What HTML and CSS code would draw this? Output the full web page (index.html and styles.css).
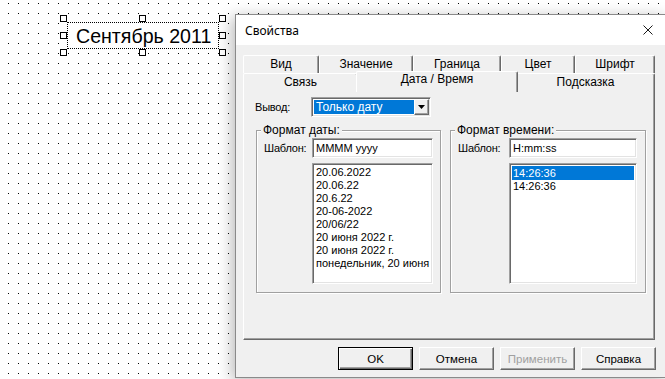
FILE: index.html
```html
<!DOCTYPE html>
<html lang="ru">
<head>
<meta charset="utf-8">
<title>Свойства</title>
<link rel="stylesheet" href="styles.css">
</head>
<body>
<div class="canvas">
  <div class="sel">
    <span class="sel-text">Сентябрь 2011</span>
    <i class="h h-tl"></i><i class="h h-tm"></i><i class="h h-tr"></i>
    <i class="h h-ml"></i><i class="h h-mr"></i>
    <i class="h h-bl"></i><i class="h h-bm"></i><i class="h h-br"></i>
  </div>

  <div class="dialog">
    <div class="titlebar">
      <span class="title">Свойства</span>
      <svg class="close" width="10" height="10" viewBox="0 0 10 10"><path d="M0.5 0.5 L9.5 9.5 M9.5 0.5 L0.5 9.5" stroke="#1a1a1a" stroke-width="1" fill="none"/></svg>
    </div>
    <div class="dbody">
      <div class="tabs">
        <div class="tabrow row1">
          <div class="tab t-vid">Вид</div>
          <div class="tab t-val">Значение</div>
          <div class="tab t-bord">Граница</div>
          <div class="tab t-col">Цвет</div>
          <div class="tab t-font">Шрифт</div>
        </div>
        <div class="tabrow row2">
          <div class="tab t-link">Связь</div>
          <div class="tab t-date active">Дата / Время</div>
          <div class="tab t-hint">Подсказка</div>
        </div>
        <div class="panel">
          <div class="out-row">
            <span class="lbl out-lbl">Вывод:</span>
            <div class="combo">
              <span class="combo-val">Только дату</span>
              <span class="combo-btn"><svg width="7" height="4" viewBox="0 0 7 4"><path d="M0 0 H7 L3.5 4 Z" fill="#000"/></svg></span>
            </div>
          </div>
          <div class="groups">
            <fieldset class="grp grp-date">
              <legend>Формат даты:</legend>
              <div class="grp-grid">
                <span class="lbl">Шаблон:</span>
                <div class="input">MMMM yyyy</div>
                <div class="list">
                  <div class="item">20.06.2022</div>
                  <div class="item">20.06.22</div>
                  <div class="item">20.6.22</div>
                  <div class="item">20-06-2022</div>
                  <div class="item">20/06/22</div>
                  <div class="item">20 июня 2022 г.</div>
                  <div class="item">20 июня 2022 г.</div>
                  <div class="item">понедельник, 20 июня</div>
                </div>
              </div>
            </fieldset>
            <fieldset class="grp grp-time">
              <legend>Формат времени:</legend>
              <div class="grp-grid">
                <span class="lbl">Шаблон:</span>
                <div class="input">H:mm:ss</div>
                <div class="list">
                  <div class="item selected">14:26:36</div>
                  <div class="item">14:26:36</div>
                </div>
              </div>
            </fieldset>
          </div>
        </div>
      </div>
      <div class="buttons">
        <button class="btn default">OK</button>
        <button class="btn">Отмена</button>
        <button class="btn disabled">Применить</button>
        <button class="btn">Справка</button>
      </div>
    </div>
  </div>
</div>
</body>
</html>
```
FILE: styles.css
```css
html, body {
  margin: 0;
  padding: 0;
}
body {
  width: 665px;
  height: 379px;
  overflow: hidden;
  font-family: "Liberation Sans", Arial, sans-serif;
  color: #000;
}
.canvas {
  position: relative;
  width: 665px;
  height: 379px;
  background-color: #fff;
  background-image:
    linear-gradient(#fff 9px, rgba(255,255,255,0) 9px),
    linear-gradient(90deg, #000 1px, rgba(0,0,0,0) 1px);
  background-size: 10px 10px, 10px 10px;
  background-position: 8px 4px, 8px 4px;
}

/* selected text element on the design canvas */
.sel {
  position: absolute;
  left: 67px;
  top: 22px;
  width: 152px;
  height: 27px;
  box-sizing: border-box;
  border: 1px dotted #000;
  background: #fff;
  display: flex;
  align-items: center;
  padding-left: 8px;
}
.sel-text {
  font-family: "Liberation Sans", Arial, sans-serif;
  font-size: 19.6px;
  line-height: 22px;
  color: #000;
  white-space: nowrap;
}
.h {
  position: absolute;
  width: 7px;
  height: 7px;
  box-sizing: border-box;
  border: 1px solid #000;
  background: #fff;
}
.h-tl { left: -8px; top: -8px; }
.h-tm { left: 71px; top: -8px; }
.h-tr { right: -8px; top: -8px; }
.h-ml { left: -8px; top: 9px; }
.h-mr { right: -8px; top: 9px; }
.h-bl { left: -8px; bottom: -8px; }
.h-bm { left: 71px; bottom: -8px; }
.h-br { right: -8px; bottom: -8px; }

/* dialog window */
.dialog {
  position: absolute;
  left: 235px;
  top: 14px;
  width: 432px;
  height: 364px;
  box-sizing: border-box;
  border: 1px solid #8a8a8a;
  background: #f0f0f0;
  box-shadow: -3px 3px 14px rgba(0,0,0,0.28);
  display: flex;
  flex-direction: column;
}
.titlebar {
  height: 30px;
  background: #fff;
  display: flex;
  align-items: center;
  justify-content: space-between;
  padding: 0 13px 0 9px;
  flex: none;
}
.title {
  font-family: "Noto Sans", "Liberation Sans", sans-serif;
  font-size: 12px;
  color: #000;
}
.close { display: block; }

.dbody {
  padding: 10px 0 0 7px;
  display: flex;
  flex-direction: column;
}
.tabs {
  width: 412px;
  display: flex;
  flex-direction: column;
}
.tabrow {
  display: flex;
  height: 18px;
  position: relative;
}
.row1 { z-index: 1; }
.row2 { z-index: 2; }
.tab {
  box-sizing: border-box;
  height: 18px;
  border-top: 1px solid #fff;
  border-left: 1px solid #fff;
  border-right: 1px solid #696969;
  box-shadow: inset -1px 0 #a0a0a0;
  border-radius: 2px 2px 0 0;
  background: #f0f0f0;
  font-size: 12px;
  line-height: 16px;
  text-align: center;
  white-space: nowrap;
}
.row2 .tab { height: 19px; }
.t-vid { width: 76px; }
.t-val { width: 94px; }
.t-bord { width: 88px; }
.t-col { width: 74px; }
.t-font { width: 80px; }
.t-link { width: 115px; }
.t-date { width: 158px; }
.t-hint { width: 139px; }
.tab.active {
  width: 162px;
  height: 21px;
  margin: -2px -2px -1px;
  position: relative;
  z-index: 3;
  line-height: 15px;
}

.panel {
  box-sizing: border-box;
  width: 412px;
  height: 250px;
  border: 1px solid;
  border-color: #fff #696969 #696969 #fff;
  box-shadow: inset -1px -1px #a0a0a0;
  background: #f0f0f0;
  padding: 6px 0 0 11px;
  display: flex;
  flex-direction: column;
  position: relative;
  z-index: 1;
  margin-top: -1px;
}
.lbl {
  font-size: 11px;
  letter-spacing: -0.2px;
  white-space: nowrap;
}
.out-row {
  display: flex;
  align-items: center;
  height: 20px;
}
.out-lbl { width: 56px; }
.combo {
  box-sizing: border-box;
  width: 120px;
  height: 20px;
  border: 1px solid;
  border-color: #a0a0a0 #fff #fff #a0a0a0;
  box-shadow: inset 1px 1px #696969, inset -1px -1px #e3e3e3;
  background: #fff;
  padding: 2px;
  display: flex;
}
.combo-val {
  flex: 1;
  background: #0078d7;
  color: #fff;
  font-size: 12px;
  line-height: 14px;
  padding-left: 2px;
  white-space: nowrap;
}
.combo-btn {
  box-sizing: border-box;
  width: 15px;
  border: 1px solid;
  border-color: #fff #696969 #696969 #fff;
  box-shadow: inset -1px -1px #a0a0a0;
  background: #f0f0f0;
  display: flex;
  align-items: center;
  justify-content: center;
  margin-top: -1px;
  margin-bottom: -1px;
  margin-right: -1px;
}
.combo-btn svg { display: block; }

.groups {
  display: flex;
  margin-top: 6px;
  margin-left: 1px;
  gap: 9px;
}
.grp {
  box-sizing: border-box;
  margin: 0;
  min-width: 0;
  height: 170px;
  border: 1px solid #a0a0a0;
  box-shadow: inset 1px 1px #fff, 1px 1px #fff;
  padding: 0 7px 6px 7px;
}
.grp-date { width: 185px; }
.grp-time { width: 196px; }
.grp legend {
  font-size: 12px;
  line-height: 14px;
  padding: 0 2px;
  margin-left: -3px;
  background: #f0f0f0;
  white-space: nowrap;
}
.grp-grid {
  display: grid;
  grid-template-rows: 20px 121px;
  row-gap: 5px;
  align-items: center;
  margin-top: 1px;
}
.grp-date .grp-grid { grid-template-columns: 48px 121px; }
.grp-time .grp-grid { grid-template-columns: 51px 128px; }
.input {
  box-sizing: border-box;
  height: 20px;
  border: 1px solid;
  border-color: #a0a0a0 #fff #fff #a0a0a0;
  box-shadow: inset 1px 1px #696969, inset -1px -1px #e3e3e3;
  background: #fff;
  font-size: 11px;
  line-height: 18px;
  padding-left: 3px;
  white-space: nowrap;
}
.list {
  grid-column: 2;
  box-sizing: border-box;
  height: 121px;
  align-self: stretch;
  border: 1px solid;
  border-color: #a0a0a0 #fff #fff #a0a0a0;
  box-shadow: inset 1px 1px #696969, inset -1px -1px #e3e3e3;
  background: #fff;
  padding: 2px 2px 0 2px;
  overflow: hidden;
}
.item {
  font-size: 11px;
  line-height: 13px;
  padding-left: 1px;
  white-space: nowrap;
}
.item.selected {
  background: #0078d7;
  color: #fff;
  line-height: 14px;
}

.buttons {
  display: flex;
  justify-content: flex-end;
  gap: 6px;
  width: 413px;
  margin-top: 7px;
}
.btn {
  box-sizing: border-box;
  width: 75px;
  height: 23px;
  margin: 0;
  padding: 0;
  border: 1px solid;
  border-color: #fff #696969 #696969 #fff;
  box-shadow: inset -1px -1px #a0a0a0;
  background: #f0f0f0;
  font-family: "Liberation Sans", Arial, sans-serif;
  font-size: 11.5px;
  color: #000;
}
.btn.default {
  border: 1px solid #000;
  box-shadow: inset 1px 1px #fff, inset -1px -1px #696969, inset -2px -2px #a0a0a0;
}
.btn.disabled {
  color: #a0a0a0;
}
```
